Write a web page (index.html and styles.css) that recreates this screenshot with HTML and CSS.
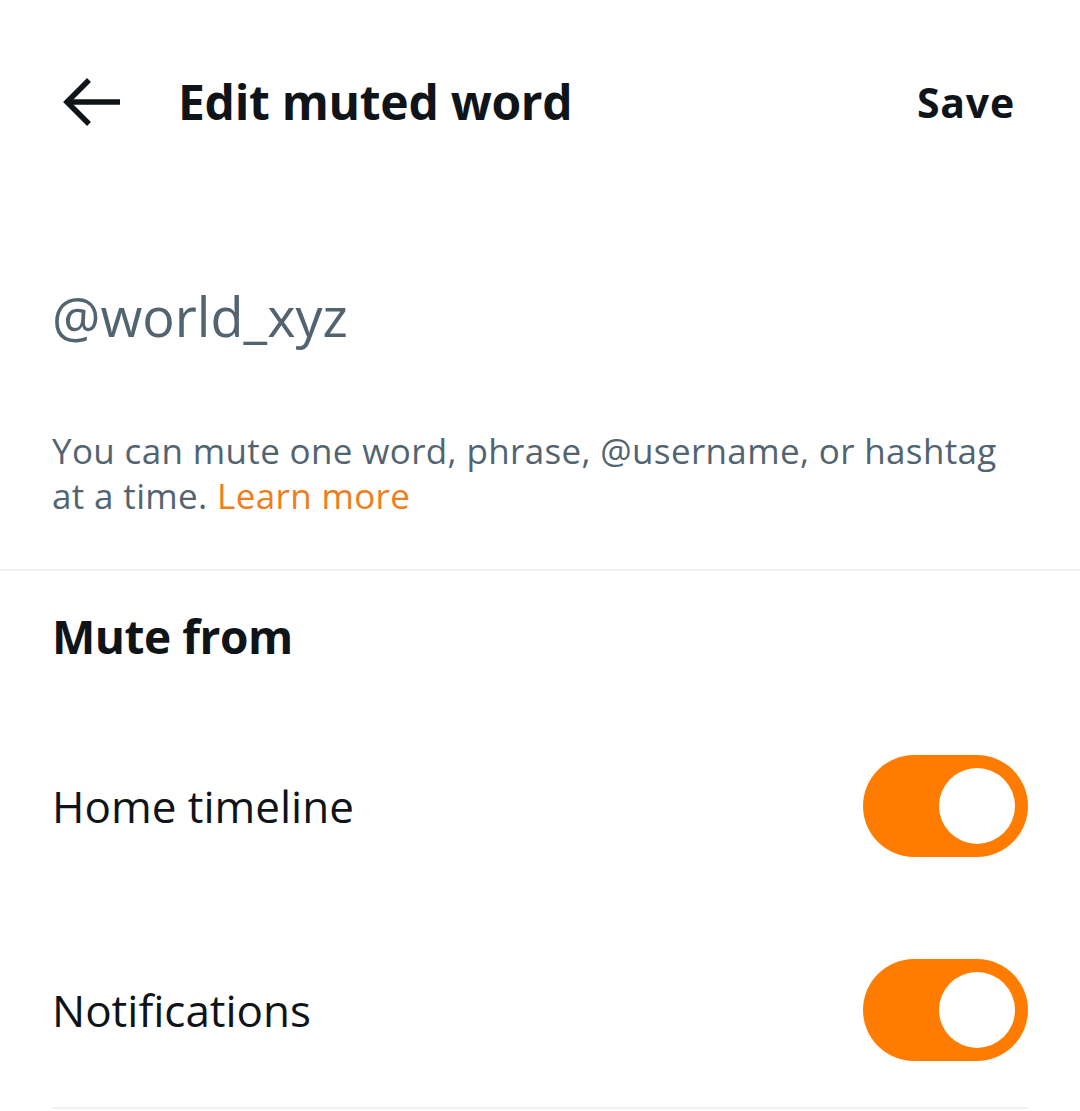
FILE: index.html
```html
<!DOCTYPE html>
<html lang="en">
<head>
<meta charset="utf-8">
<title>Edit muted word</title>
<link rel="stylesheet" href="styles.css">
</head>
<body>
<div class="screen">
  <header class="header">
    <button class="back" aria-label="Back">
      <svg class="back-icon" viewBox="0 0 60 50" width="60" height="50" aria-hidden="true">
        <path d="M4 25 H58" fill="none" stroke="#0f1419" stroke-width="5.5"/>
        <path d="M27 3 L5 25 L27 47" fill="none" stroke="#0f1419" stroke-width="5.5"/>
      </svg>
    </button>
    <h1 class="title">Edit muted word</h1>
    <span class="save">Save</span>
  </header>

  <section class="entry">
    <div class="word">@world_xyz</div>
    <p class="hint">You can mute one word, phrase, @username, or hashtag at a time. <a class="link" href="#">Learn more</a></p>
  </section>

  <div class="divider"></div>

  <section class="mute">
    <h2 class="mute-title">Mute from</h2>
    <div class="rows">
      <div class="row">
        <span class="row-label">Home timeline</span>
        <span class="toggle"><span class="knob"></span></span>
      </div>
      <div class="row">
        <span class="row-label">Notifications</span>
        <span class="toggle"><span class="knob"></span></span>
      </div>
    </div>
  </section>
</div>
</body>
</html>
```
FILE: styles.css
```css
* { box-sizing: border-box; }
html, body { margin: 0; padding: 0; background: #ffffff; }
body {
  font-family: "Open Sans", "Noto Sans", sans-serif;
  color: #0f1419;
}
.screen { width: 1080px; height: 1111px; overflow: hidden; }

.header {
  height: 204px;
  display: flex;
  align-items: center;
  padding: 0 65px 0 62px;
}
.back {
  border: 0;
  background: none;
  padding: 0;
  width: 60px;
  height: 50px;
  margin-right: 56px;
  display: flex;
}
.title {
  margin: 0;
  flex: 1;
  font-size: 48px;
  font-weight: 700;
  letter-spacing: -0.3px;
  line-height: 60px;
}
.save {
  font-size: 41px;
  font-weight: 700;
  letter-spacing: 0.8px;
  line-height: 60px;
}

.entry { padding: 82px 52px 51px; }
.word {
  font-size: 54px;
  line-height: 60px;
  color: #536471;
}
.hint {
  margin: 82px 0 0;
  font-size: 35px;
  letter-spacing: 0.35px;
  line-height: 45px;
  color: #536471;
}
.link { color: #f07d1a; text-decoration: none; }

.divider { height: 2px; background: #eff3f4; }

.mute { padding: 35px 52px 0; }
.mute-title {
  margin: 0;
  font-size: 46px;
  font-weight: 700;
  letter-spacing: -0.5px;
  line-height: 60px;
}
.rows { margin-top: 38px; }
.row {
  display: flex;
  align-items: center;
  justify-content: space-between;
  padding: 51px 0;
}
.row:last-child {
  padding-bottom: 46px;
  border-bottom: 2px solid #eff3f4;
}
.row-label { font-size: 44px; line-height: 60px; }
.toggle {
  width: 165px;
  height: 102px;
  border-radius: 51px;
  background: #ff7c00;
  display: flex;
  align-items: center;
  justify-content: flex-end;
  padding: 0 13px;
}
.knob {
  width: 76px;
  height: 76px;
  border-radius: 50%;
  background: #ffffff;
}
```
